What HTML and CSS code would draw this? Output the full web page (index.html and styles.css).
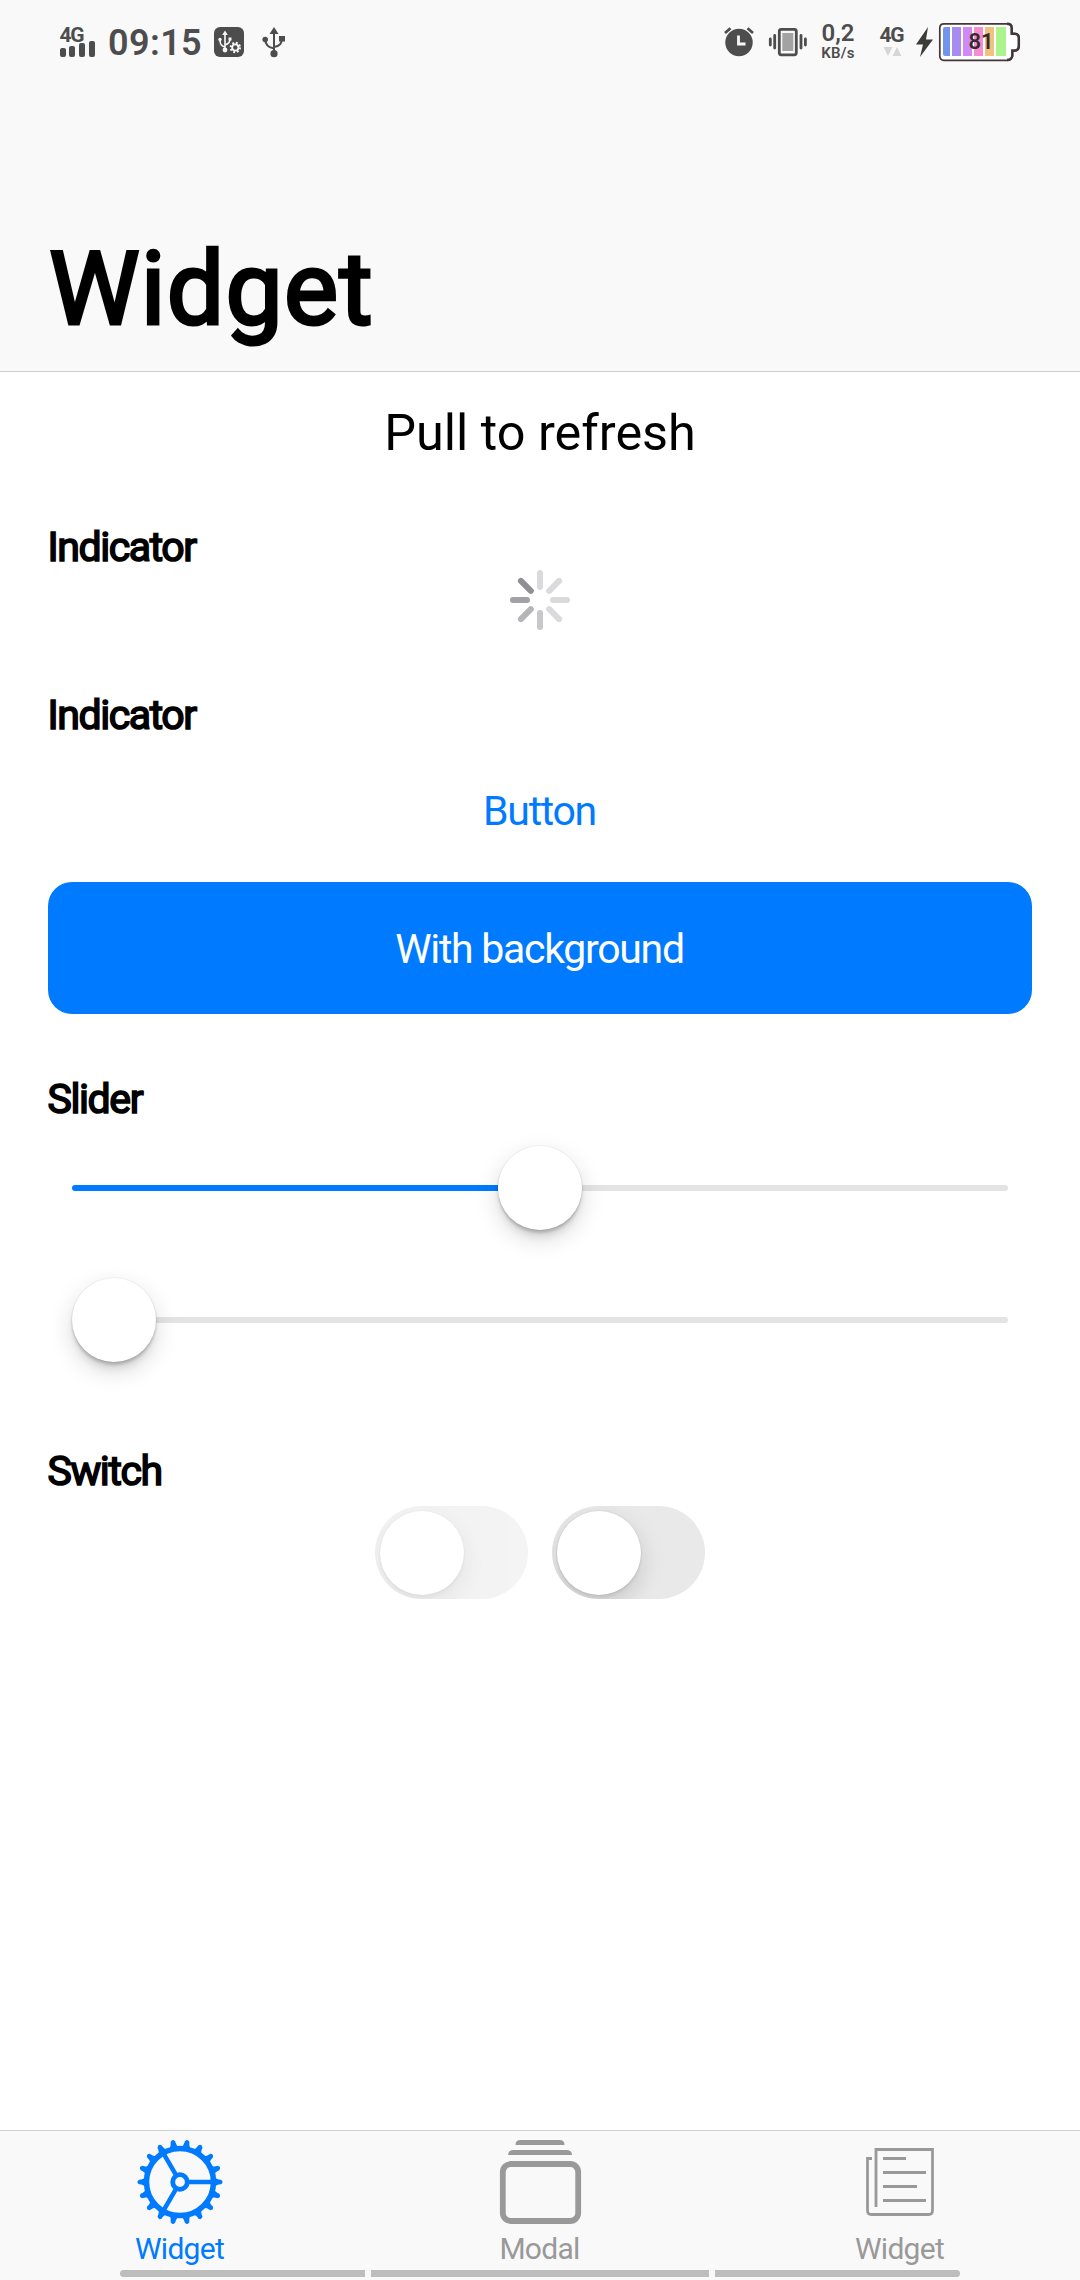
FILE: index.html
```html
<!DOCTYPE html>
<html lang="en">
<head>
<meta charset="utf-8">
<title>Widget</title>
<link rel="stylesheet" href="styles.css">
</head>
<body>
<div class="screen">
  <header class="header">
    <div class="status">
      <div class="status-group">
        <svg class="ic-signal" width="36" height="36" viewBox="60 24 36 36">
          <text x="59.500" y="42" class="net-label">4G</text>
          <g fill="#4d4d4d"><rect x="60" y="48" width="6" height="9" rx="2"/><rect x="69" y="46" width="6" height="11" rx="2"/><rect x="79" y="43" width="6" height="14" rx="2"/><rect x="89" y="41" width="6" height="16" rx="2"/></g>
        </svg>
        <span class="clock">09:15</span>
        <svg class="ic-debug" width="30" height="30" viewBox="0 0 30 30">
          <rect width="30" height="30" rx="6" fill="#4d4d4d"/>
          <g fill="none" stroke="#f9f9f9" stroke-width="1.6"><path d="M11 7v15M11 20C8 19 6 18 6 13M11 18C14 17 16 16 16 12"/></g>
          <path d="M11 3.5l2.800 4.500h-5.600z" fill="#f9f9f9"/><circle cx="6" cy="12.500" r="1.700" fill="#f9f9f9"/><rect x="14.500" y="10.500" width="3" height="3" fill="#f9f9f9"/><circle cx="11" cy="23" r="2.400" fill="#f9f9f9"/>
          <circle cx="21.300" cy="20.500" r="4" fill="#f9f9f9"/>
          <circle cx="21.300" cy="20.500" r="4.600" fill="none" stroke="#f9f9f9" stroke-width="2.200" stroke-dasharray="1.806 1.806"/>
          <circle cx="21.300" cy="20.500" r="2.200" fill="#4d4d4d"/>
        </svg>
        <svg class="ic-usb" width="24" height="31" viewBox="262 27 24 31">
          <path d="M274 31v22M274 48.500C268 47.500 265.200 45 265.200 39M274 47C280 46 282 43.500 282 37" fill="none" stroke="#4d4d4d" stroke-width="2"/>
          <path d="M274 27l4.500 7h-9z" fill="#4d4d4d"/><circle cx="265.200" cy="39.500" r="2.800" fill="#4d4d4d"/><rect x="279" y="36" width="6" height="5.500" fill="#4d4d4d"/><circle cx="274" cy="53.700" r="3.600" fill="#4d4d4d"/>
        </svg>
      </div>
      <div class="status-group">
        <svg width="30" height="30" viewBox="724 28 30 30">
          <circle cx="739" cy="43.500" r="13.700" fill="#4d4d4d"/>
          <path d="M725 34l5.500-4.800M753 34l-5.500-4.800" stroke="#4d4d4d" stroke-width="2.800"/>
          <path d="M738.500 36.500v8.500h7" fill="none" stroke="#f9f9f9" stroke-width="2.800"/>
        </svg>
        <svg class="ic-vibrate" width="38" height="30" viewBox="769 27 38 30">
          <rect x="779.300" y="29.300" width="17" height="25.500" rx="2" fill="#f9f9f9" stroke="#4d4d4d" stroke-width="2.800"/>
          <rect x="782.300" y="33" width="11" height="18" fill="#a3a3a3"/>
          <path d="M770.300 39v6M774.700 35.500v12.500M801 35.500v12.500M805.400 39v6" stroke="#4d4d4d" stroke-width="2.800" stroke-linecap="round"/>
        </svg>
        <div class="speed"><span class="speed-num">0,2</span><span class="speed-unit">KB/s</span></div>
        <svg class="ic-net" width="26" height="36" viewBox="880 24 26 36">
          <text x="879.500" y="42" class="net-label">4G</text>
          <path d="M883.500 47h9l-4.500 9zM892.500 56h9l-4.500-9z" fill="#d6d6d6"/>
        </svg>
        <svg class="ic-bolt" width="18" height="31" viewBox="916 27 18 31"><path d="M928 27L916 44.500H923L920 57L933 39.500H926Z" fill="#3c3c38"/></svg>
        <svg class="ic-battery" width="83" height="40" viewBox="938 22 83 40">
          <path d="M944 23.800H1007Q1011.500 23.800 1011.500 28V33.500H1014.500Q1019.200 33.500 1019.200 38V46Q1019.200 50.800 1014.500 50.800H1012.500V56Q1011.500 60.300 1007 60.300H944Q939.800 60.300 939.800 56V28Q939.800 23.800 944 23.800Z" fill="#fff" stroke="#443639" stroke-width="1.700"/>
          <path d="M1007 23.800Q1011.800 23.800 1011.800 28V33.800H1014.500Q1018.700 34 1018.700 38V46Q1018.700 50.500 1014.500 50.500H1012.300V56Q1011.500 60 1007 60" fill="none" stroke="#443639" stroke-width="2.400"/>
          <path d="M945 27h5v29h-5q-2 0-2-2V29q0-2 2-2z" fill="#7294ea"/>
          <rect x="952" y="27" width="9" height="29" fill="#a78bf0"/><rect x="963" y="27" width="9" height="29" fill="#d18af5"/><rect x="974" y="27" width="9" height="29" fill="#f78dcf"/><rect x="985" y="27" width="9" height="29" fill="#efc27e"/><rect x="996" y="27" width="10" height="29" fill="#acf58d"/>
          <text x="968.500" y="48.800" class="battery-label">81</text>
        </svg>
      </div>
    </div>
    <h1 class="title">Widget</h1>
  </header>

  <main class="content">
    <p class="pull">Pull to refresh</p>

    <section class="indicator">
      <h2>Indicator</h2>
      <svg class="spinner" width="60" height="60" viewBox="-30 -30 60 60" stroke-width="6" stroke-linecap="round">
        <path d="M0-27V-13" stroke="#dadadc"/>
        <path d="M0-27V-13" stroke="#dadadc" transform="rotate(45)"/>
        <path d="M0-27V-13" stroke="#dadadc" transform="rotate(90)"/>
        <path d="M0-27V-13" stroke="#dadadc" transform="rotate(135)"/>
        <path d="M0-27V-13" stroke="#c8c8ca" transform="rotate(180)"/>
        <path d="M0-27V-13" stroke="#b5b5b8" transform="rotate(225)"/>
        <path d="M0-27V-13" stroke="#a2a2a6" transform="rotate(270)"/>
        <path d="M0-27V-13" stroke="#8f8f94" transform="rotate(315)"/>
      </svg>
    </section>

    <section class="buttons">
      <h2>Indicator</h2>
      <button class="btn btn-plain">Button</button>
      <button class="btn btn-filled">With background</button>
    </section>

    <section class="sliders">
      <h2>Slider</h2>
      <div class="slider"><span class="fill"></span><span class="knob"></span><span class="rest"></span></div>
      <div class="slider"><span class="knob"></span><span class="rest"></span></div>
    </section>

    <section class="switches">
      <h2>Switch</h2>
      <div class="switch-row">
        <div class="switch disabled"><span class="switch-knob"></span></div>
        <div class="switch"><span class="switch-knob"></span></div>
      </div>
    </section>
  </main>

  <nav class="tabs">
    <a class="tab active">
      <svg width="90" height="90" viewBox="-45 -45 90 90">
        <g fill="none" stroke="#007aff">
          <circle r="33.500" stroke-width="5.500"/><circle r="7.300" stroke-width="4.800"/>
          <path d="M9 0H32M-4.500-7.800L-16-27.700M-4.500 7.800L-16 27.700" stroke-width="4.500"/>
        </g>
        <g fill="#007aff" id="teeth"></g>
      </svg>
      <span>Widget</span>
    </a>
    <a class="tab">
      <svg width="90" height="90" viewBox="495 2137 90 90">
        <path d="M515.500 2145q0-5 5-5h39q5 0 5 5zM508 2155q0-5 6-5h52q6 0 6 5z" fill="#999"/>
        <rect x="502.800" y="2164" width="75.400" height="57" rx="8" fill="none" stroke="#999" stroke-width="5.800"/>
      </svg>
      <span>Modal</span>
    </a>
    <a class="tab">
      <svg width="90" height="90" viewBox="855 2137 90 90">
        <path d="M876 2207V2149.500H932.500V2210.500Q932.500 2214.500 928.500 2214.500H871.500Q867.500 2214.500 867.500 2210.500V2158.500H872" fill="none" stroke="#999" stroke-width="2.800"/>
        <path d="M883 2158.500h23M883 2172.500h43M883 2186.500h34M883 2200.500h43" stroke="#999" stroke-width="2.800"/>
      </svg>
      <span>Widget</span>
    </a>
    <div class="home-bars"><i></i><i></i><i></i></div>
  </nav>
</div>
<script src="gear.js"></script>
</body>
</html>
```
FILE: styles.css
```css
* { box-sizing: border-box; }
body { margin: 0; background: #fff; font-family: Roboto, sans-serif; color: #000; }
h1, h2, p { margin: 0; }
.screen { width: 1080px; height: 2280px; display: flex; flex-direction: column; overflow: hidden; }

.header { height: 372px; flex: none; background: #f9f9f9; border-bottom: 1px solid #cfcfcf; }
.status { height: 84px; padding: 0 59px 0 60px; display: flex; justify-content: space-between; align-items: center; color: #4d4d4d; }
.status svg { overflow: visible; }
.status-group { display: flex; align-items: center; }
.net-label { font: 700 21px Roboto, sans-serif; fill: #4d4d4d; letter-spacing: -1.2px; }
.clock { margin-left: 12px; width: 94px; padding-top: 2px; font-size: 36px; font-weight: 600; line-height: 42px; letter-spacing: 0.4px; white-space: nowrap; }
.ic-debug { margin-left: 12px; }
.ic-usb { margin-left: 18px; }
.ic-vibrate { margin-left: 15px; }
.speed { margin-left: 13px; margin-right: 1px; padding-top: 1px; width: 36px; height: 42px; display: flex; flex-direction: column; align-items: center; }
.speed-num { font-size: 24px; line-height: 22px; font-weight: 600; }
.speed-unit { font-size: 15px; line-height: 18px; font-weight: 600; letter-spacing: 0.3px; }
.ic-net { margin-left: 23px; }
.ic-bolt { margin-left: 10px; }
.ic-battery { margin-left: 4px; }
.battery-label { font: 600 22px Roboto, sans-serif; fill: #352b2e; }
.title { margin-top: 145px; padding-left: 49px; font-size: 102px; font-weight: 400; line-height: 120px; letter-spacing: 1.23px; -webkit-text-stroke: 3.200px #000; }

.content { flex: 1; padding: 31px 48px 0; }
.pull { height: 60px; font-size: 50.400px; line-height: 60px; text-align: center; }
h2 { height: 48px; font-size: 41px; line-height: 50px; font-weight: 400; letter-spacing: -1.400px; text-indent: -0.500px; -webkit-text-stroke: 1.600px #000; }
.indicator { margin-top: 59px; height: 168px; display: flex; flex-direction: column; }
.spinner { align-self: center; }
.buttons { height: 324px; display: flex; flex-direction: column; }
.btn { height: 132px; padding: 0 1px 0 0; border: 0; background: none; border-radius: 24px; font: 400 41px/50px Roboto, sans-serif; letter-spacing: -1.300px; color: #007aff; }
.btn-plain { padding-top: 14px; }
.btn-filled { margin-top: 12px; padding-top: 2px; background: #007aff; color: #fff; }
.sliders { margin-top: 60px; height: 372px; }
.slider { height: 132px; padding: 0 24px; display: flex; align-items: center; }
.fill, .rest { height: 6px; }
.fill { width: 426px; background: #007aff; border-radius: 3px 0 0 3px; }
.rest { flex: 1; background: #e3e3e4; border-radius: 0 3px 3px 0; }
.knob { width: 84px; height: 84px; border-radius: 50%; background: #fff; position: relative; box-shadow: 0 0 0 1px rgba(0,0,0,.04), 0 9px 24px rgba(0,0,0,.15), 0 3px 3px rgba(0,0,0,.16), 0 9px 9px -3px rgba(0,0,0,.10); }
.switch-row { margin-top: 12px; display: flex; justify-content: center; gap: 24px; }
.switch { width: 153px; height: 93px; padding: 4.500px; border-radius: 46.500px; background: #e9e9ea; overflow: hidden; }
.switch-knob { display: block; width: 84px; height: 84px; border-radius: 50%; background: #fff; box-shadow: 0 9px 24px rgba(0,0,0,.15), 0 3px 3px rgba(0,0,0,.06), 0 0 0 1px rgba(0,0,0,.04); }
.disabled { opacity: .5; }

.tabs { height: 150px; flex: none; display: flex; position: relative; background: #f9f9f9; border-top: 1px solid #cfcfcf; color: #999; }
.tab { flex: 1; padding-top: 6px; display: flex; flex-direction: column; align-items: center; font-size: 30px; line-height: 36px; letter-spacing: -0.72px; }
.tab span { margin-top: 4px; padding-right: 1px; }
.active { color: #007aff; }
.home-bars { position: absolute; left: 120px; right: 120px; bottom: 3px; height: 7px; display: flex; gap: 6px; }
.home-bars i { background: #bdbdbd; flex: 0 0 245px; }
.home-bars i:nth-child(2) { flex: 1; }
.home-bars i:first-child { border-radius: 4px 0 0 4px; }
.home-bars i:last-child { border-radius: 0 4px 4px 0; }
```
FILE: gear.js
```js
const teeth = document.getElementById("teeth");
const count = 18;
for (let i = 0; i < count; i++) {
  const tooth = document.createElementNS("http://www.w3.org/2000/svg", "path");
  tooth.setAttribute("d", "M34-5.500Q36-2.600 41-2.300Q44.200 0 41 2.300Q36 2.600 34 5.500Z");
  tooth.setAttribute("transform", `rotate(${(i * 360) / count})`);
  teeth.appendChild(tooth);
}
```
